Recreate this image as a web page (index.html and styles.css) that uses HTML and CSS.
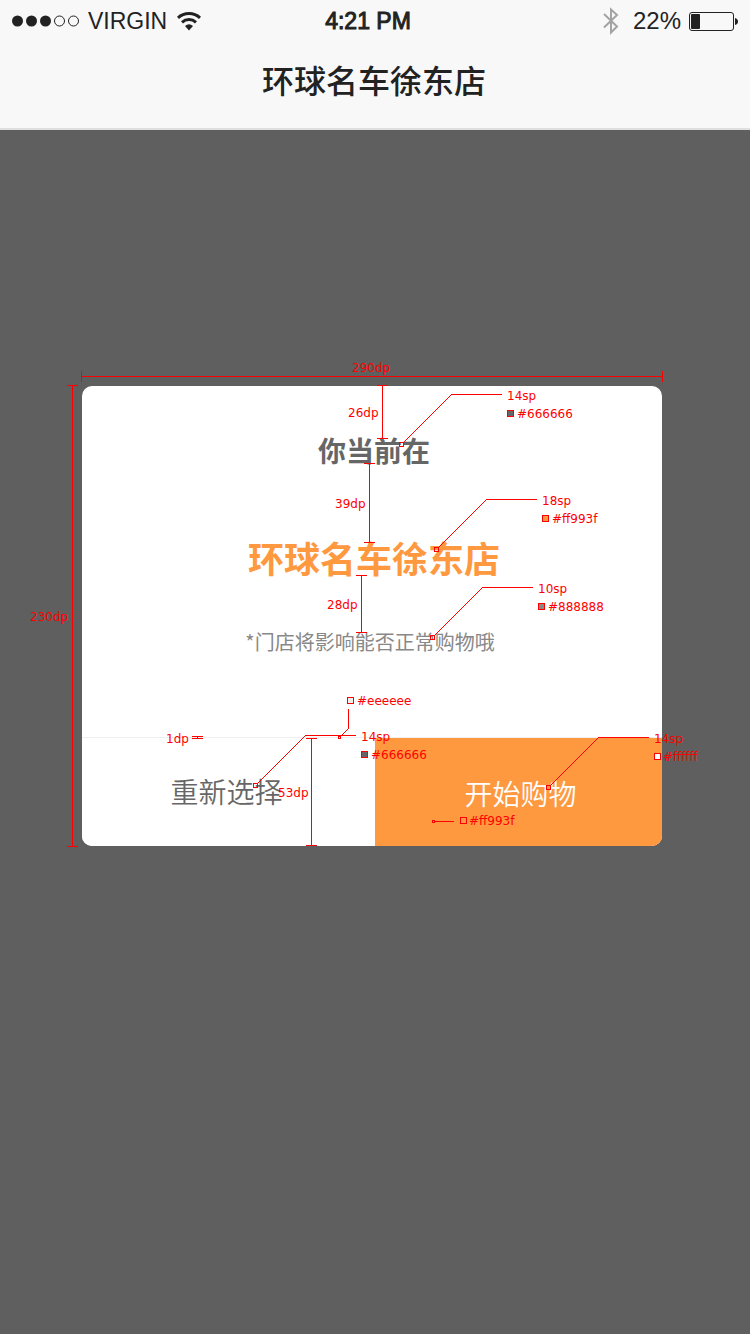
FILE: index.html
```html
<!DOCTYPE html>
<html lang="zh-CN">
<head>
<meta charset="utf-8">
<meta name="viewport" content="width=device-width, initial-scale=1">
<title>环球名车徐东店</title>
<link rel="stylesheet" href="styles.css">
</head>
<body class="screen">
<header class="header">
  <div class="status">
    <div class="status-left">
      <svg class="signal" width="68" height="12" viewBox="0 0 68 12" aria-hidden="true">
        <circle cx="5.5" cy="6" r="5.5"/><circle cx="19.5" cy="6" r="5.5"/><circle cx="33.5" cy="6" r="5.5"/>
        <circle class="signal-off" cx="47.5" cy="6" r="5"/><circle class="signal-off" cx="61.5" cy="6" r="5"/>
      </svg>
      <span class="carrier">VIRGIN</span>
      <svg class="wifi" width="24" height="19" viewBox="0 0 24 19" aria-hidden="true">
        <path class="wifi-arc" d="M1 5.8C7.2 .1 16.8 .1 23 5.8M5 10.3C9 6.7 15 6.7 19 10.3"/>
        <path d="M8 14Q12 10.6 16 14L12 18.5Z"/>
      </svg>
    </div>
    <time class="clock">4:21 PM</time>
    <div class="status-right">
      <svg class="bluetooth" width="16" height="28" viewBox="0 0 16 28" aria-hidden="true">
        <path d="M1 7L14 19.5L8 25.5V2.5L14 8L1 20.5"/>
      </svg>
      <span>22%</span>
      <svg class="battery" width="49" height="19" viewBox="0 0 49 19" aria-hidden="true">
        <rect class="battery-case" x=".5" y=".5" width="44" height="18" rx="2.5"/>
        <rect x="2" y="2" width="9" height="15" rx="1"/>
        <path d="M46 6Q49 7 49 9.5T46 13Z"/>
      </svg>
    </div>
  </div>
  <h1 class="page-title">环球名车徐东店</h1>
</header>
<main class="stage">
  <div class="dialog-wrap">
    <section class="dialog" role="dialog" aria-labelledby="dialog-title">
      <div class="dialog-body">
        <h2 class="dialog-title" id="dialog-title">你当前在</h2>
        <p class="store">环球名车徐东店</p>
        <p class="note">*门店将影响能否正常购物哦</p>
      </div>
      <div class="actions">
        <button class="btn" type="button">重新选择</button>
        <button class="btn btn-primary" type="button">开始购物</button>
      </div>
    </section>
    <svg class="specs" viewBox="82 386 580 460">
      <g class="rules">
        <path d="M81 376.5H663M81.5 371V382M662.5 371V382"/>
        <path d="M72.5 385V847M67 385.5H78M67 846.5H78"/>
        <path d="M382.5 385V439M377 385.5H388M377 438.5H388"/>
        <path d="M369.5 463V543M364 463.5H375M364 542.5H375"/>
        <path d="M361.5 575V633M356 575.5H367M356 632.5H367"/>
        <path d="M192 736.5H203M192 738.5H203M197.5 736V739"/>
        <path d="M311.5 738V846M306 738.5H317M306 845.5H317"/>
        <path d="M451 394.5H502M486 499.5H537M482 587.5H533M305 735.5H356M598 737.5H649M348.5 709V729M435 821.5H454"/>
        <path d="M399.5 442.5h4v4h-4zM434.5 547.5h4v4h-4zM430.5 635.5h4v4h-4zM253.5 783.5h4v4h-4zM546.5 785.5h4v4h-4zM338.5 736.5h2v2h-2zM432.5 820.5h2v2h-2z"/>
      </g>
      <path class="leaders" d="M403.5 442.5L451.5 394.5M438.5 547.5L486.5 499.5M434.5 635.5L482.5 587.5M257.5 783.5L305.5 735.5M550.5 785.5L598.5 737.5M340.5 736.5L348.5 728.5"/>
      <g class="swatches">
        <rect x="507.5" y="410.5" width="6" height="6" fill="#666666"/>
        <rect x="542.5" y="515.5" width="6" height="6" fill="#ff993f"/>
        <rect x="538.5" y="603.5" width="6" height="6" fill="#888888"/>
        <rect x="347.5" y="697.5" width="6" height="6" fill="#eeeeee"/>
        <rect x="361.5" y="751.5" width="6" height="6" fill="#666666"/>
        <rect x="654.5" y="753.5" width="6" height="6" fill="#ffffff"/>
        <rect x="460.5" y="817.5" width="6" height="6" fill="#ff993f"/>
      </g>
      <g class="labels">
        <text x="352" y="372">290dp</text>
        <text x="30" y="621">230dp</text>
        <text x="348" y="417">26dp</text>
        <text x="335" y="508">39dp</text>
        <text x="327" y="609">28dp</text>
        <text x="166" y="743">1dp</text>
        <text x="278" y="797">53dp</text>
        <text x="507" y="400">14sp</text><text x="517" y="418">#666666</text>
        <text x="542" y="505">18sp</text><text x="552" y="523">#ff993f</text>
        <text x="538" y="593">10sp</text><text x="548" y="611">#888888</text>
        <text x="357" y="705">#eeeeee</text>
        <text x="361" y="741">14sp</text><text x="371" y="759">#666666</text>
        <text x="654" y="743">14sp</text><text x="663" y="761">#ffffff</text>
        <text x="469" y="825">#ff993f</text>
      </g>
    </svg>
  </div>
</main>
</body>
</html>
```
FILE: styles.css
```css
* { box-sizing: border-box; }

.screen {
  display: flex;
  flex-direction: column;
  min-height: 100vh;
  margin: 0;
  background: #5f5f5f;
  color: #222;
  font-family: "Noto Sans CJK SC", sans-serif;
}

.header {
  padding-bottom: 25px;
  background: #f8f8f8;
  border-bottom: 2px solid #dfdfdf;
}

.status {
  display: grid;
  grid-template-columns: 1fr auto 1fr;
  align-items: center;
  height: 42px;
  padding: 0 12px;
  font: 24px/28px "Liberation Sans", sans-serif;
}
.status svg { flex: none; fill: #222; }
.status-left, .status-right { display: flex; align-items: center; }
.status-left { gap: 8px; }
.status-right { justify-content: flex-end; gap: 8px; }
.carrier { font-size: 23px; }
.wifi { margin-left: 2px; }
.clock { padding-right: 14px; font-size: 23px; -webkit-text-stroke: 1px #222; }

.signal .signal-off { fill: none; stroke: #222; }
.wifi .wifi-arc { fill: none; stroke: #222; stroke-width: 3; }
.status .bluetooth { margin-right: 6px; fill: none; stroke: #a3a3a3; stroke-width: 2; }
.battery .battery-case { fill: none; stroke: #222; }

.page-title {
  margin: 0;
  padding: 13px 2px 0 0;
  font-size: 32px;
  font-weight: 500;
  line-height: 48px;
  text-align: center;
}

.stage { flex: 1; padding: 256px 88px 48px 82px; }
.dialog-wrap { position: relative; }

.dialog {
  overflow: hidden;
  border-radius: 10px;
  background: #fff;
}
.dialog-body {
  padding: 43px 0 80px;
  border-bottom: 1px solid #eee;
  text-align: center;
}
.dialog-title, .store, .note { margin: 0; }
.dialog-title {
  padding-left: 4px;
  color: #666;
  font-size: 28px;
  font-weight: bold;
  line-height: 42px;
}
.store {
  margin-top: 59px;
  padding-left: 4px;
  color: #ff993f;
  font-size: 36px;
  font-weight: bold;
  line-height: 54px;
}
.note {
  margin-top: 43px;
  padding-right: 4px;
  color: #888;
  font-size: 20px;
  line-height: 30px;
}

.actions { display: grid; grid-template-columns: 293fr 287fr; }
.btn {
  height: 108px;
  padding: 0 4px 2px 0;
  border: 0;
  background: #fff;
  color: #666;
  font: 350 28px/42px "Noto Sans CJK SC", sans-serif;
}
.btn-primary { padding: 2px 0 0 4px; background: #ff993f; color: #fff; }

/* Measurement layer drawn over the dialog */
.specs {
  position: absolute;
  top: 0;
  left: 0;
  width: 100%;
  overflow: visible;
  pointer-events: none;
}
.rules, .swatches { stroke: #f00; shape-rendering: crispEdges; }
.rules { fill: none; }
.leaders { fill: none; stroke: #f00; stroke-width: 1; }
.labels { fill: #f00; font: 12px "DejaVu Sans", sans-serif; }
```
